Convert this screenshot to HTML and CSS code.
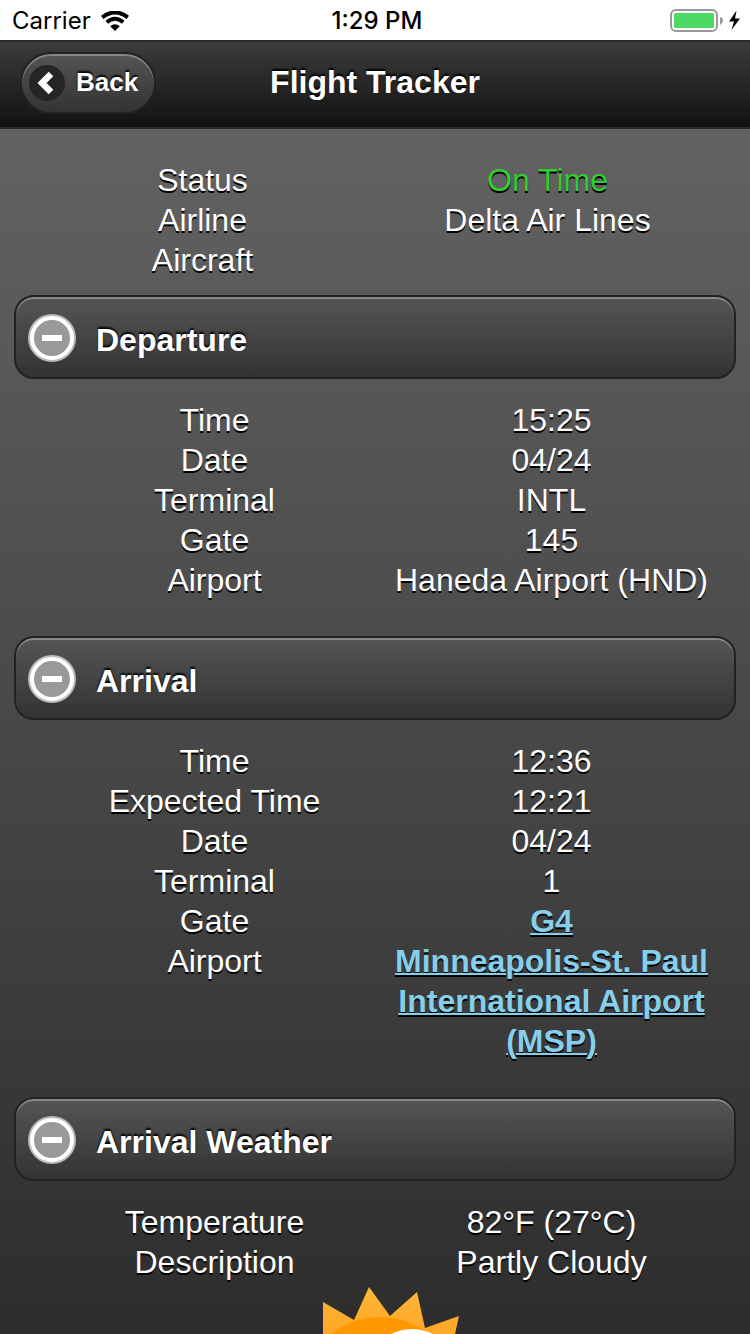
FILE: index.html
```html
<!DOCTYPE html>
<html lang="en">
  <head>
    <meta charset="UTF-8" />
    <meta name="viewport" content="width=device-width, initial-scale=1.0" />
    <title>Flight Tracker</title>
    <link rel="stylesheet" href="styles.css">
  </head>
  <body>
    <!-- Device status bar -->
    <div class="status-bar">
      <div class="carrier">
        <span>Carrier</span>
        <svg width="28" height="20" viewBox="0 0 28 20" aria-hidden="true">
          <path d="M1.2 6.4Q14-3.6 26.8 6.4" fill="none" stroke="#000" stroke-width="4" />
          <path d="M5.8 11.2Q14 4.4 22.2 11.2" fill="none" stroke="#000" stroke-width="4" />
          <path d="M14 20L9.2 15.2Q14 11.4 18.8 15.2Z" />
        </svg>
      </div>
      <span class="clock">1:29 PM</span>
      <div class="battery">
        <svg width="72" height="24" viewBox="0 0 72 24" aria-hidden="true">
          <rect x="1" y="1" width="46" height="21" rx="5" fill="#fff" stroke="#999" stroke-width="2" />
          <rect x="4" y="4" width="40" height="15" rx="1.5" fill="#4cd964" />
          <path d="M50 8Q53 9 53 11.5T50 16Z" fill="#999" />
          <path d="M66.5 1.5L59 12.5H64L61.5 21L70 9.5H65Z" />
        </svg>
      </div>
    </div>

    <header>
      <button type="button" class="back-btn">
        <span class="back-icon">
          <svg width="36" height="36" viewBox="0 0 36 36" aria-hidden="true">
            <path d="M22 9L13 18L22 27" fill="none" stroke="#fff" stroke-width="6.5" />
          </svg>
        </span>
        Back
      </button>
      <h1>Flight Tracker</h1>
    </header>

    <main>
      <table class="flight-summary">
        <tr><th scope="row">Status</th><td class="on-time">On Time</td></tr>
        <tr><th scope="row">Airline</th><td>Delta Air Lines</td></tr>
        <tr><th scope="row">Aircraft</th><td></td></tr>
      </table>

      <section>
        <h2>
          <button type="button" class="section-btn" aria-expanded="true">
            <span class="minus-icon"></span>
            Departure
          </button>
        </h2>
        <table>
          <tr><th scope="row">Time</th><td>15:25</td></tr>
          <tr><th scope="row">Date</th><td>04/24</td></tr>
          <tr><th scope="row">Terminal</th><td>INTL</td></tr>
          <tr><th scope="row">Gate</th><td>145</td></tr>
          <tr><th scope="row">Airport</th><td>Haneda Airport (HND)</td></tr>
        </table>
      </section>

      <section>
        <h2>
          <button type="button" class="section-btn" aria-expanded="true">
            <span class="minus-icon"></span>
            Arrival
          </button>
        </h2>
        <table>
          <tr><th scope="row">Time</th><td>12:36</td></tr>
          <tr><th scope="row">Expected Time</th><td>12:21</td></tr>
          <tr><th scope="row">Date</th><td>04/24</td></tr>
          <tr><th scope="row">Terminal</th><td>1</td></tr>
          <tr><th scope="row">Gate</th><td><a href="#gate">G4</a></td></tr>
          <tr><th scope="row">Airport</th><td><a href="#airport">Minneapolis-St. Paul International Airport (MSP)</a></td></tr>
        </table>
      </section>

      <section class="weather">
        <h2>
          <button type="button" class="section-btn" aria-expanded="true">
            <span class="minus-icon"></span>
            Arrival Weather
          </button>
        </h2>
        <table>
          <tr><th scope="row">Temperature</th><td>82°F (27°C)</td></tr>
          <tr><th scope="row">Description</th><td>Partly Cloudy</td></tr>
        </table>
        <svg class="weather-icon" width="200" height="50" viewBox="0 0 200 50" role="img" aria-label="Partly cloudy">
          <defs>
            <linearGradient id="rays" x1="0" y1="0" x2="0" y2="1">
              <stop offset="0" stop-color="#ffb638" />
              <stop offset="1" stop-color="#ffa726" />
            </linearGradient>
          </defs>
          <path d="M48 50V18L79 36L94 3L115 32L142 8L150 44L184 32L180 50Z" fill="url(#rays)" />
          <circle cx="105" cy="112" r="79" fill="#ff9800" />
          <circle cx="137" cy="91" r="46" fill="#fff" />
        </svg>
      </section>
    </main>
  </body>
</html>
```
FILE: styles.css
```css
body {
  margin: 0;
  min-height: 100vh;
  font-family: "Liberation Sans", Helvetica, Arial, sans-serif;
  font-size: 32px;
  line-height: 40px;
  color: #fff;
  background: linear-gradient(#686868, #2d2d2d);
}

button {
  font-family: inherit;
  font-weight: bold;
  color: #fff;
  text-shadow: 0 -2px 2px #000;
  border: 2px solid #222;
  background: linear-gradient(#555, #333);
  cursor: pointer;
}

/* Device status bar */
.status-bar {
  display: grid;
  grid-template-columns: 1fr auto 1fr;
  align-items: center;
  height: 40px;
  padding: 2px 8px 0 12px;
  box-sizing: border-box;
  background: #fff;
  color: #000;
  font-family: Inter, sans-serif;
  font-size: 24px;
  line-height: 32px;
}

.carrier {
  display: flex;
  align-items: center;
  gap: 10px;
}

.clock {
  font-weight: 500;
}

.battery {
  display: flex;
  justify-content: flex-end;
}

/* Header */
header {
  display: grid;
  grid-template-columns: 1fr auto 1fr;
  align-items: center;
  height: 89px;
  padding: 0 20px 4px;
  box-sizing: border-box;
  border-top: 2px solid #2a2a2a;
  border-bottom: 2px solid #2a2a2a;
  background: linear-gradient(#3c3c3c, #111);
}

h1 {
  margin: 0 0 2px;
  font-size: 32px;
  text-shadow: 0 -2px 2px #000;
}

.back-btn {
  justify-self: start;
  display: flex;
  align-items: center;
  gap: 11px;
  height: 62px;
  padding: 0 16px 0 7px;
  border-radius: 31px;
  font-size: 26px;
  box-shadow: inset 0 2px 0 #888;
}

.back-icon {
  display: flex;
  border-radius: 50%;
  background: #252525;
}

/* Sections */
main {
  padding: 31px 14px 0;
}

section {
  margin-bottom: 36px;
}

h2 {
  margin: 0 0 21px;
  font-size: 32px;
}

.section-btn {
  display: flex;
  align-items: center;
  gap: 22px;
  width: 100%;
  height: 84px;
  padding: 6px 12px 0;
  border-radius: 20px;
  font-size: 32px;
  box-shadow: inset 0 2px 0 #888;
}

.minus-icon {
  display: flex;
  align-items: center;
  justify-content: center;
  width: 36px;
  height: 36px;
  margin: 0 0 4px 2px;
  border: 4px solid #fff;
  border-radius: 50%;
  background: #999;
  box-shadow: 0 0 0 2px #bbb;
}

.minus-icon::before {
  content: "";
  width: 20px;
  height: 6px;
  background: #fff;
}

table {
  width: calc(100% - 48px);
  margin: 0 16px 0 32px;
  table-layout: fixed;
  border-collapse: collapse;
  text-shadow: 0 2px 0 #000;
}

.flight-summary {
  width: calc(100% - 32px);
  margin: 0 16px 15px;
}

th,
td {
  width: 50%;
  padding: 0;
  font-weight: normal;
  text-align: center;
  vertical-align: top;
}

.on-time {
  color: #32cd32;
}

td a {
  color: #87ceeb;
  font-weight: bold;
  text-decoration-thickness: 2px;
}

/* Weather */
.weather {
  margin-bottom: 0;
}

.weather-icon {
  display: block;
  margin: 2px auto 0;
}
```
